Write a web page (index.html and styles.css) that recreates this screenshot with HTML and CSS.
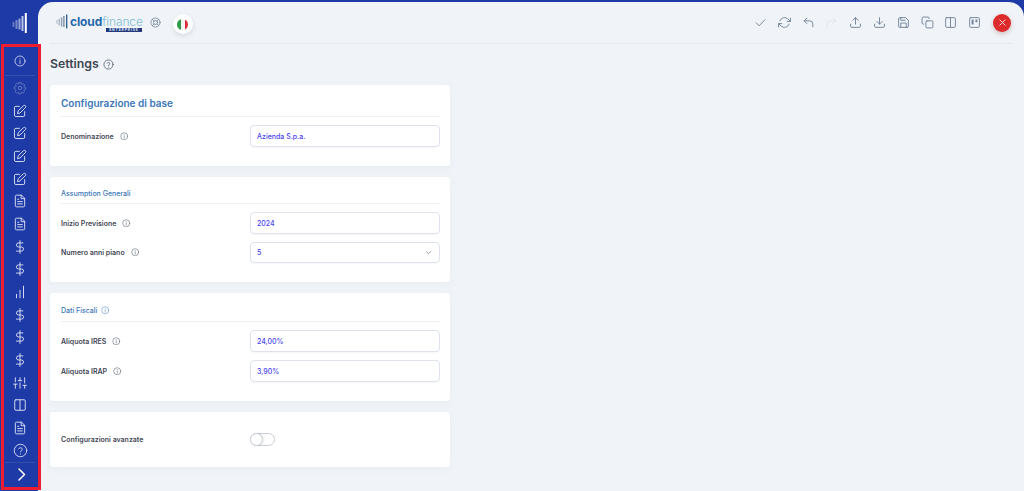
FILE: index.html
```html
<!DOCTYPE html>
<html lang="it">
<head>
<meta charset="utf-8">
<title>Settings</title>
<link rel="stylesheet" href="styles.css">
</head>
<body>
<svg class="sprite" width="0" height="0" aria-hidden="true">
  <symbol id="info" viewBox="0 0 24 24"><circle cx="12" cy="12" r="10"/><path d="M12 11v6M12 7.500v.5"/></symbol>
  <symbol id="help" viewBox="0 0 24 24"><circle cx="12" cy="12" r="10"/><path d="M9.200 9.300a2.900 2.900 0 0 1 5.600 1c0 2-2.800 2.400-2.800 4M12 17.600v.2"/></symbol>
  <symbol id="gear" viewBox="0 0 24 24"><circle cx="12" cy="12" r="3"/><path d="M10.300 3h3.400l.6 2.700 1.700.8 2.400-1.400 2.300 2.400-1.400 2.300.7 1.800 2.400.6v3.400l-2.600.6-.7 1.700 1.400 2.400-2.400 2.300-2.300-1.400-1.800.7-.6 2.600h-3.400l-.6-2.600-1.800-.7-2.300 1.400-2.400-2.300 1.400-2.400-.7-1.700L1.400 15v-3.400l2.600-.6.7-1.800-1.400-2.300 2.300-2.400 2.400 1.400 1.700-.8z" transform="translate(12 12) scale(.92) translate(-12 -13.300)"/></symbol>
  <symbol id="edit" viewBox="0 0 24 24"><path d="M11 4H5a2.500 2.500 0 0 0-2.500 2.500V19A2.500 2.500 0 0 0 5 21.500h12.500A2.500 2.500 0 0 0 20 19v-6"/><path d="M18.300 2.700a2.300 2.300 0 0 1 3.200 3.200L12 15.500l-4.200 1 1-4.200z"/></symbol>
  <symbol id="doc" viewBox="0 0 24 24"><path d="M14 2H6a2 2 0 0 0-2 2v16a2 2 0 0 0 2 2h12a2 2 0 0 0 2-2V8z"/><path d="M14 2v6h6M8 13h8M8 17h8M8 9h2"/></symbol>
  <symbol id="dollar" viewBox="0 0 24 24"><path d="M12 1v22M17 5H9.500a3.500 3.500 0 0 0 0 7h5a3.500 3.500 0 0 1 0 7H6"/></symbol>
  <symbol id="bars" viewBox="0 0 24 24"><path d="M18 2v20M12 9v13M6 16v6"/></symbol>
  <symbol id="sliders" viewBox="0 0 24 24"><path d="M4 21v-7M4 10V3M12 21v-9M12 8V3M20 21v-5M20 12V3M1 14h6M9 8h6M17 16h6"/></symbol>
  <symbol id="columns" viewBox="0 0 24 24"><rect x="3" y="3" width="18" height="18" rx="2"/><path d="M12 3v18"/></symbol>
  <symbol id="check" viewBox="0 0 24 24"><path d="M4 12.500l5.500 5.500L20 7"/></symbol>
  <symbol id="refresh" viewBox="0 0 24 24"><path d="M23 4v6h-6M1 20v-6h6"/><path d="M3.500 9a9 9 0 0 1 14.900-3.400L23 10M1 14l4.600 4.400A9 9 0 0 0 20.500 15"/></symbol>
  <symbol id="undo" viewBox="0 0 24 24"><path d="M9 14L4 9l5-5"/><path d="M4 9h10.500a5.500 5.500 0 0 1 5.500 5.500V20"/></symbol>
  <symbol id="redo" viewBox="0 0 24 24"><path d="M15 14l5-5-5-5"/><path d="M20 9H9.500A5.500 5.500 0 0 0 4 14.500V20"/></symbol>
  <symbol id="upload" viewBox="0 0 24 24"><path d="M3 15v4a2 2 0 0 0 2 2h14a2 2 0 0 0 2-2v-4M17 8l-5-5-5 5M12 3v12"/></symbol>
  <symbol id="download" viewBox="0 0 24 24"><path d="M3 15v4a2 2 0 0 0 2 2h14a2 2 0 0 0 2-2v-4M7 10l5 5 5-5M12 15V3"/></symbol>
  <symbol id="save" viewBox="0 0 24 24"><path d="M19 21H5a2 2 0 0 1-2-2V5a2 2 0 0 1 2-2h11l5 5v11a2 2 0 0 1-2 2z"/><path d="M17 21v-8H7v8M7 3v5h8"/></symbol>
  <symbol id="copy" viewBox="0 0 24 24"><rect x="9" y="9" width="13" height="13" rx="2"/><path d="M5 15H4a2 2 0 0 1-2-2V4a2 2 0 0 1 2-2h9a2 2 0 0 1 2 2v1"/></symbol>
  <symbol id="kanban" viewBox="0 0 24 24"><rect x="3" y="3" width="18" height="18" rx="2"/><path stroke-width="3.500" stroke-linecap="butt" d="M8.500 6.500v9M15.500 6.500v5"/></symbol>
  <symbol id="lifebuoy" viewBox="0 0 24 24"><circle cx="12" cy="12" r="10"/><circle cx="12" cy="12" r="4.500"/><path d="M5 5l3.800 3.800M19 5l-3.800 3.800M5 19l3.800-3.800M19 19l-3.800-3.800"/></symbol>
</svg>

<div class="app">
  <nav class="sidebar">
    <div class="brand">
      <svg class="brand-mark" viewBox="0 0 16 22"><path class="b1" d="M1.500 10v5"/><path class="b2" d="M4.500 8v9"/><path class="b3" d="M7.500 6.500v11"/><path class="b4" d="M10.500 4v15"/><path class="b5" d="M13.800 1v20"/></svg>
    </div>
    <div class="nav-group nav-top"><a class="nav-item"><svg class="ico"><use href="#info"/></svg></a></div>
    <div class="nav-group nav-list">
      <a class="nav-item dim"><svg class="ico"><use href="#gear"/></svg></a>
      <a class="nav-item"><svg class="ico"><use href="#edit"/></svg></a>
      <a class="nav-item"><svg class="ico"><use href="#edit"/></svg></a>
      <a class="nav-item"><svg class="ico"><use href="#edit"/></svg></a>
      <a class="nav-item"><svg class="ico"><use href="#edit"/></svg></a>
      <a class="nav-item"><svg class="ico"><use href="#doc"/></svg></a>
      <a class="nav-item"><svg class="ico"><use href="#doc"/></svg></a>
      <a class="nav-item"><svg class="ico"><use href="#dollar"/></svg></a>
      <a class="nav-item"><svg class="ico"><use href="#dollar"/></svg></a>
      <a class="nav-item"><svg class="ico"><use href="#bars"/></svg></a>
      <a class="nav-item"><svg class="ico"><use href="#dollar"/></svg></a>
      <a class="nav-item"><svg class="ico"><use href="#dollar"/></svg></a>
      <a class="nav-item"><svg class="ico"><use href="#dollar"/></svg></a>
      <a class="nav-item"><svg class="ico"><use href="#sliders"/></svg></a>
      <a class="nav-item"><svg class="ico"><use href="#columns"/></svg></a>
      <a class="nav-item"><svg class="ico"><use href="#doc"/></svg></a>
      <a class="nav-item nav-help"><svg class="ico"><use href="#help"/></svg></a>
    </div>
    <div class="nav-foot">
      <svg class="chev" viewBox="0 0 8 13"><path d="M1 1l5.500 5.500L1 12"/></svg>
    </div>
    <div class="highlight"></div>
  </nav>

  <main class="panel">
    <header class="topbar">
      <div class="logo">
        <svg class="logo-mark" viewBox="0 0 14 16"><path class="lb1" d="M1 7v4"/><path class="lb2" d="M3.500 5.500v7"/><path class="lb3" d="M6 4v10"/><path class="lb4" d="M8.500 2.500v12"/><path class="lb5" d="M11.500 1v15"/></svg>
        <div class="logo-words">
          <div class="logo-name"><b>cloud</b><span>finance</span></div>
          <div class="logo-tag">ENTERPRISE</div>
        </div>
      </div>
      <svg class="ico tool buoy"><use href="#lifebuoy"/></svg>
      <div class="flag-wrap"><div class="flag"><i class="fg"></i><i class="fw"></i><i class="fr"></i></div></div>
      <div class="tools">
        <svg class="ico tool"><use href="#check"/></svg>
        <svg class="ico tool"><use href="#refresh"/></svg>
        <svg class="ico tool"><use href="#undo"/></svg>
        <svg class="ico tool off"><use href="#redo"/></svg>
        <svg class="ico tool"><use href="#upload"/></svg>
        <svg class="ico tool"><use href="#download"/></svg>
        <svg class="ico tool"><use href="#save"/></svg>
        <svg class="ico tool"><use href="#copy"/></svg>
        <svg class="ico tool"><use href="#columns"/></svg>
        <svg class="ico tool"><use href="#kanban"/></svg>
        <button class="close" type="button"><svg viewBox="0 0 10 10"><path d="M2 2l6 6M8 2l-6 6"/></svg></button>
      </div>
    </header>

    <div class="content">
      <h1 class="title">Settings <svg class="ico hint-lg"><use href="#help"/></svg></h1>

      <section class="card card-base">
        <h2 class="card-title big">Configurazione di base</h2>
        <div class="row"><label class="lbl">Denominazione <svg class="ico hint"><use href="#info"/></svg></label><div class="field">Azienda S.p.a.</div></div>
      </section>

      <section class="card card-assume">
        <h2 class="card-title">Assumption Generali</h2>
        <div class="row"><label class="lbl">Inizio Previsione <svg class="ico hint"><use href="#info"/></svg></label><div class="field">2024</div></div>
        <div class="row"><label class="lbl">Numero anni piano <svg class="ico hint"><use href="#info"/></svg></label><div class="field select">5<svg class="caret" viewBox="0 0 10 6"><path d="M1.500 1.200L5 4.700l3.500-3.500"/></svg></div></div>
      </section>

      <section class="card card-tax">
        <h2 class="card-title">Dati Fiscali <svg class="ico hint blue"><use href="#info"/></svg></h2>
        <div class="row"><label class="lbl">Aliquota IRES <svg class="ico hint"><use href="#info"/></svg></label><div class="field">24,00%</div></div>
        <div class="row"><label class="lbl">Aliquota IRAP <svg class="ico hint"><use href="#info"/></svg></label><div class="field">3,90%</div></div>
      </section>

      <section class="card card-adv">
        <div class="row"><label class="lbl">Configurazioni avanzate</label><div class="toggle"><i class="knob"></i></div></div>
      </section>
    </div>
  </main>
</div>
</body>
</html>
```

FILE: styles.css
```css
* { box-sizing: border-box; }
html, body { margin: 0; height: 100%; overflow: hidden; }
body { background: #1e3aa6; font-family: Inter, "Liberation Sans", sans-serif; color: #3f4654; }
.sprite { position: absolute; }

.app { display: flex; height: 491px; }

.ico { fill: none; stroke: currentColor; stroke-width: 1.7; stroke-linecap: round; stroke-linejoin: round; display: block; }

/* sidebar */
.sidebar { position: relative; flex: 0 0 38px; width: 38px; padding-left: 2px; display: flex; flex-direction: column; align-items: center; color: #dbe3f6; }
.brand { height: 47px; flex: none; display: flex; align-items: flex-start; justify-content: center; padding-top: 12px; width: 100%; }
.brand-mark { width: 16px; height: 22px; fill: none; stroke-linecap: butt; stroke: #fff; }
.brand-mark path { stroke-width: 2; }
.b1 { opacity: .3; } .b2 { opacity: .4; } .b3 { opacity: .55; } .b4 { opacity: .7; } .b5 { opacity: 1; }

.nav-group { width: 100%; display: flex; flex-direction: column; align-items: center; }
.nav-top { padding: 3px 0 2px; height: 28px; justify-content: flex-start; }
.nav-list { border-top: 1px solid rgba(255,255,255,.1); width: 30px; padding-top: .5px; }
.nav-item { display: flex; height: 22.700px; width: 100%; align-items: center; justify-content: center; }
.nav-top .nav-item { height: 22px; }
.nav-item .ico { width: 14px; height: 14px; stroke-width: 1.600; }
.nav-top .nav-item .ico { width: 12px; height: 12px; }
.nav-help.nav-item .ico { width: 15px; height: 15px; stroke-width: 1.400; }
.nav-item.dim { opacity: .4; }
.nav-foot { width: 30px; flex: 1; border-top: 1px solid rgba(255,255,255,.1); display: flex; align-items: center; justify-content: center; padding-bottom: 5px; }
.chev { width: 8px; height: 13px; fill: none; stroke: #fff; stroke-width: 1.500; stroke-linecap: round; stroke-linejoin: round; margin-left: 4px; }
.highlight { position: absolute; left: 1px; top: 44px; width: 40px; height: 446px; border: 3px solid #ed1c2e; z-index: 3; pointer-events: none; }

/* panel */
.panel { flex: 1; margin-top: 2px; background: #f0f4f8; border-radius: 15px 15px 0 0; padding: 0 12px; min-width: 0; }
.topbar { height: 42px; display: flex; align-items: center; border-bottom: 1px solid #e3e8ee; }
.logo { display: flex; align-items: center; margin-left: 6px; gap: 1px; }
.logo-mark { width: 13px; height: 16px; fill: none; stroke: #5d7191; stroke-width: 1.500; margin-top: -4px; }
.lb1 { opacity: .35; } .lb2 { opacity: .5; } .lb3 { opacity: .65; } .lb4 { opacity: .8; } .lb5 { opacity: 1; stroke: #2f5f8f; }
.logo-words { display: flex; flex-direction: column; align-items: center; margin-top: 3px; }
.logo-name { font-size: 12px; line-height: 12px; letter-spacing: -.1px; white-space: nowrap; }
.logo-name b { color: #2469ac; font-weight: 700; }
.logo-name span { color: #7fbad0; font-weight: 300; }
.logo-tag { background: #24397f; color: #dfe6f4; font-size: 3.500px; font-weight: 700; letter-spacing: .8px; line-height: 4px; width: 36px; text-align: center; margin: 0 0 0 35px; white-space: nowrap; overflow: hidden; }
.tool { width: 13px; height: 13px; color: #6f8196; flex: none; }
.buoy { width: 11px; height: 11px; margin-left: 7px; margin-top: 0; }
.flag-wrap { width: 20px; height: 20px; margin-left: 12px; margin-top: 3px; border-radius: 50%; background: #fff; box-shadow: 0 2px 5px rgba(60,70,90,.14); display: flex; align-items: center; justify-content: center; }
.flag { width: 11px; height: 11px; border-radius: 50%; overflow: hidden; display: flex; }
.flag i { flex: 1; }
.fg { background: #2f9a49; } .fw { background: #f4f4f4; } .fr { background: #dc2e3a; }
.tools { margin-left: auto; display: flex; align-items: center; gap: 10.800px; }
.tool.off { color: #dfe4ea; }
.close { width: 18px; height: 18px; border: 0; padding: 0; border-radius: 50%; background: #dd2a2a; box-shadow: 0 2px 5px rgba(120,30,30,.25); margin-left: 1px; margin-right: 1px; display: flex; align-items: center; justify-content: center; }
.close svg { width: 9px; height: 9px; fill: none; stroke: #fbe9e9; stroke-width: 1; stroke-linecap: round; }

/* content */
.content { width: 400px; }
.title { display: flex; align-items: center; gap: 4px; margin: 12px 0 0; height: 16px; font-size: 12.300px; font-weight: 600; line-height: 16px; color: #3f4654; }
.hint-lg { width: 11px; height: 11px; color: #5a6472; stroke-width: 1.800; margin-top: 1px; }
.card { background: #fff; border-radius: 3px; padding: 0 10px 0 11px; margin-bottom: 11px; box-shadow: 0 2px 8px rgba(90,105,130,.05); }
.card-base { margin-top: 13px; height: 81px; }
.card-assume { height: 105px; }
.card-tax { height: 108px; }
.card-adv { height: 55px; display: flex; align-items: center; }
.card-adv .row { width: 100%; margin: 0; }
.card-title { display: flex; align-items: center; gap: 4px; margin: 0 0 8px; height: 27px; padding-top: 6px; border-bottom: 1px solid #eef1f4; font-size: 7px; font-weight: 500; color: #3a76b8; }
.card-title.big { height: 32px; padding-top: 5px; font-size: 10px; font-weight: 600; }
.card-tax .card-title { height: 29px; padding-top: 7px; }
.row { display: flex; align-items: center; margin-bottom: 8px; }
.lbl { width: 189px; flex: none; display: flex; align-items: center; gap: 4px; font-size: 7px; font-weight: 600; color: #3f4654; white-space: nowrap; }
.hint { width: 8.500px; height: 8.500px; color: #5a6472; stroke-width: 1.600; }
.hint.blue { color: #5b8fc4; }
.lbl .hint { margin-left: 2px; }
.field { flex: 1; height: 22px; display: flex; align-items: center; padding: 0 6px; background: #fff; border: 1px solid #dde2ec; border-radius: 4px; font-size: 7px; font-weight: 500; color: #4a44f0; box-shadow: 0 1px 1px rgba(70,80,110,.04); }
.select { justify-content: space-between; height: 21px; }
.caret { width: 7px; height: 5px; fill: none; stroke: #6b7480; stroke-width: 1; margin-right: 1px; }
.toggle { position: relative; width: 25px; height: 13px; border: 1px solid #c9ced6; border-radius: 7px; background: #fff; }
.knob { position: absolute; left: -1px; top: -1px; width: 13px; height: 13px; border-radius: 50%; border: 1px solid #c9ced6; background: #fff; box-shadow: 1px 0 2px rgba(0,0,0,.1); }
```
